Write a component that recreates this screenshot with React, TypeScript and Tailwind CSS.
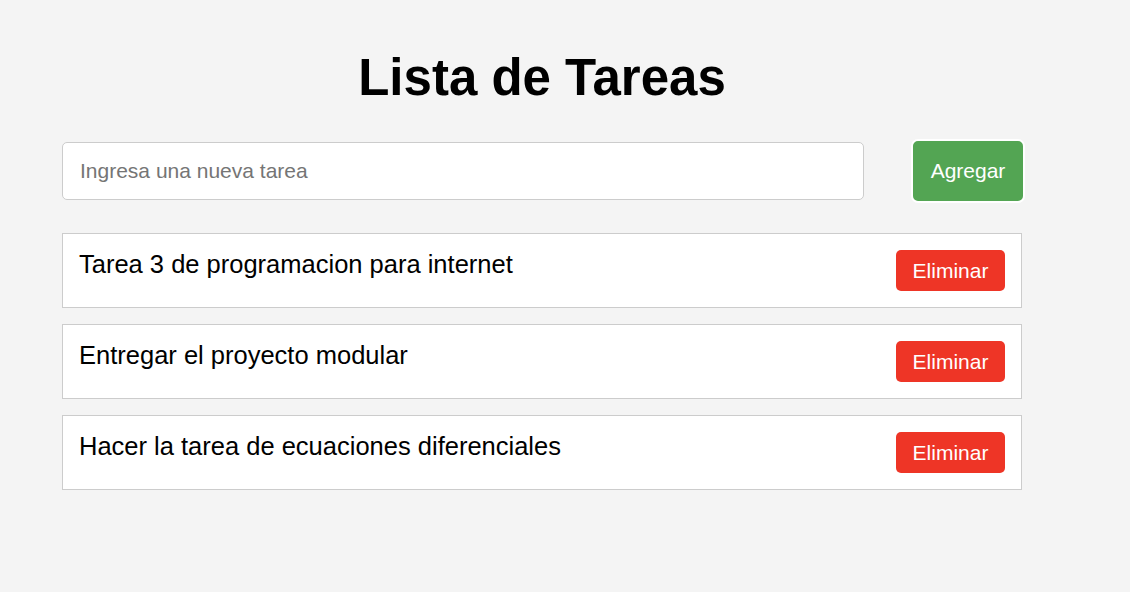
import React, { useState } from "react";

export default function App() {
  const [tasks, setTasks] = useState<string[]>([
    "Tarea 3 de programacion para internet",
    "Entregar el proyecto modular",
    "Hacer la tarea de ecuaciones diferenciales",
  ]);
  const [value, setValue] = useState("");

  const add = () => {
    if (value.trim()) {
      setTasks([...tasks, value.trim()]);
      setValue("");
    }
  };

  return (
    <div
      className="min-h-screen bg-[#f4f4f4] text-black"
      style={{ fontFamily: '"Liberation Sans", Arial, Helvetica, sans-serif' }}
    >
      <div className="ml-[62px] w-[960px] pt-[48px]">
        <h1 className="text-center text-[51px] font-bold leading-[59px]">Lista de Tareas</h1>
        <div className="mt-[32px] flex items-center">
          <input
            value={value}
            onChange={(e) => setValue(e.target.value)}
            placeholder="Ingresa una nueva tarea"
            className="h-[58px] w-[802px] shrink-0 rounded-[5px] border border-[#cccccc] bg-white px-[17px] text-[21px] text-black outline-none placeholder:text-[#757575]"
          />
          <button
            onClick={add}
            className="ml-[47px] h-[64px] w-[114px] shrink-0 rounded-[7px] border-2 border-white bg-[#53a553] text-[21px] text-white"
          >
            Agregar
          </button>
        </div>
        <ul className="mt-[30px] flex flex-col gap-4">
          {tasks.map((t, i) => (
            <li
              key={i}
              className="flex items-start justify-between border border-[#cccccc] bg-white p-4"
            >
              <span className="text-[25.5px] leading-[29px]">{t}</span>
              <button
                onClick={() => setTasks(tasks.filter((_, j) => j !== i))}
                className="h-[41px] w-[109px] shrink-0 rounded-[5px] bg-[#ee3526] text-[21px] text-white"
              >
                Eliminar
              </button>
            </li>
          ))}
        </ul>
      </div>
    </div>
  );
}
